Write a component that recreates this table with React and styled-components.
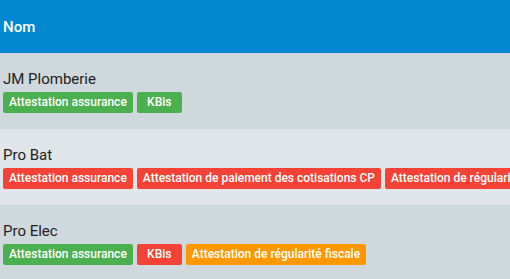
import React from "react";
import styled, { createGlobalStyle } from "styled-components";

const GlobalStyle = createGlobalStyle`
  html, body {
    margin: 0;
    padding: 0;
    overflow: hidden;
    font-family: Roboto, "Liberation Sans", sans-serif;
  }
`;

const Table = styled.div`
  width: 510px;
  display: flex;
  flex-direction: column;
`;

const Header = styled.div`
  background-color: #0288d1;
  color: #ffffff;
  height: 53px;
  display: flex;
  align-items: center;
  padding: 0 3px;
  font-size: 15px;
  font-weight: 500;
`;

const Row = styled.div`
  background-color: ${(p) => (p.$alt ? "#dfe5e8" : "#cfd8dc")};
  padding: 17px 3px 16px;
  height: 76px;
  box-sizing: border-box;
`;

const Name = styled.div`
  font-size: 15px;
  line-height: 18px;
  color: #212121;
  margin-bottom: 4px;
`;

const Badges = styled.div`
  display: flex;
  gap: 4px;
  white-space: nowrap;
`;

const colors = {
  ok: "#4caf50",
  ko: "#f44336",
  warn: "#ff9800",
};

const Badge = styled.span`
  flex: none;
  min-width: 45px;
  text-align: center;
  background-color: ${(p) => colors[p.$status]};
  color: #ffffff;
  font-size: 12px;
  font-weight: 500;
  height: 21px;
  line-height: 21px;
  padding: 0 6px;
  border-radius: 2px;
  box-sizing: border-box;
`;

const rows = [
  {
    name: "JM Plomberie",
    docs: [
      ["Attestation assurance", "ok"],
      ["KBis", "ok"],
    ],
  },
  {
    name: "Pro Bat",
    docs: [
      ["Attestation assurance", "ko"],
      ["Attestation de paiement des cotisations CP", "ko"],
      ["Attestation de régularité fiscale", "ko"],
    ],
  },
  {
    name: "Pro Elec",
    docs: [
      ["Attestation assurance", "ok"],
      ["KBis", "ko"],
      ["Attestation de régularité fiscale", "warn"],
    ],
  },
];

const App = () => {
  return (
    <>
      <GlobalStyle />
      <Table>
        <Header>Nom</Header>
        {rows.map((r, i) => (
          <Row key={r.name} $alt={i % 2 === 1}>
            <Name>{r.name}</Name>
            <Badges>
              {r.docs.map(([label, status]) => (
                <Badge key={label} $status={status}>
                  {label}
                </Badge>
              ))}
            </Badges>
          </Row>
        ))}
      </Table>
    </>
  );
};

export default App;
